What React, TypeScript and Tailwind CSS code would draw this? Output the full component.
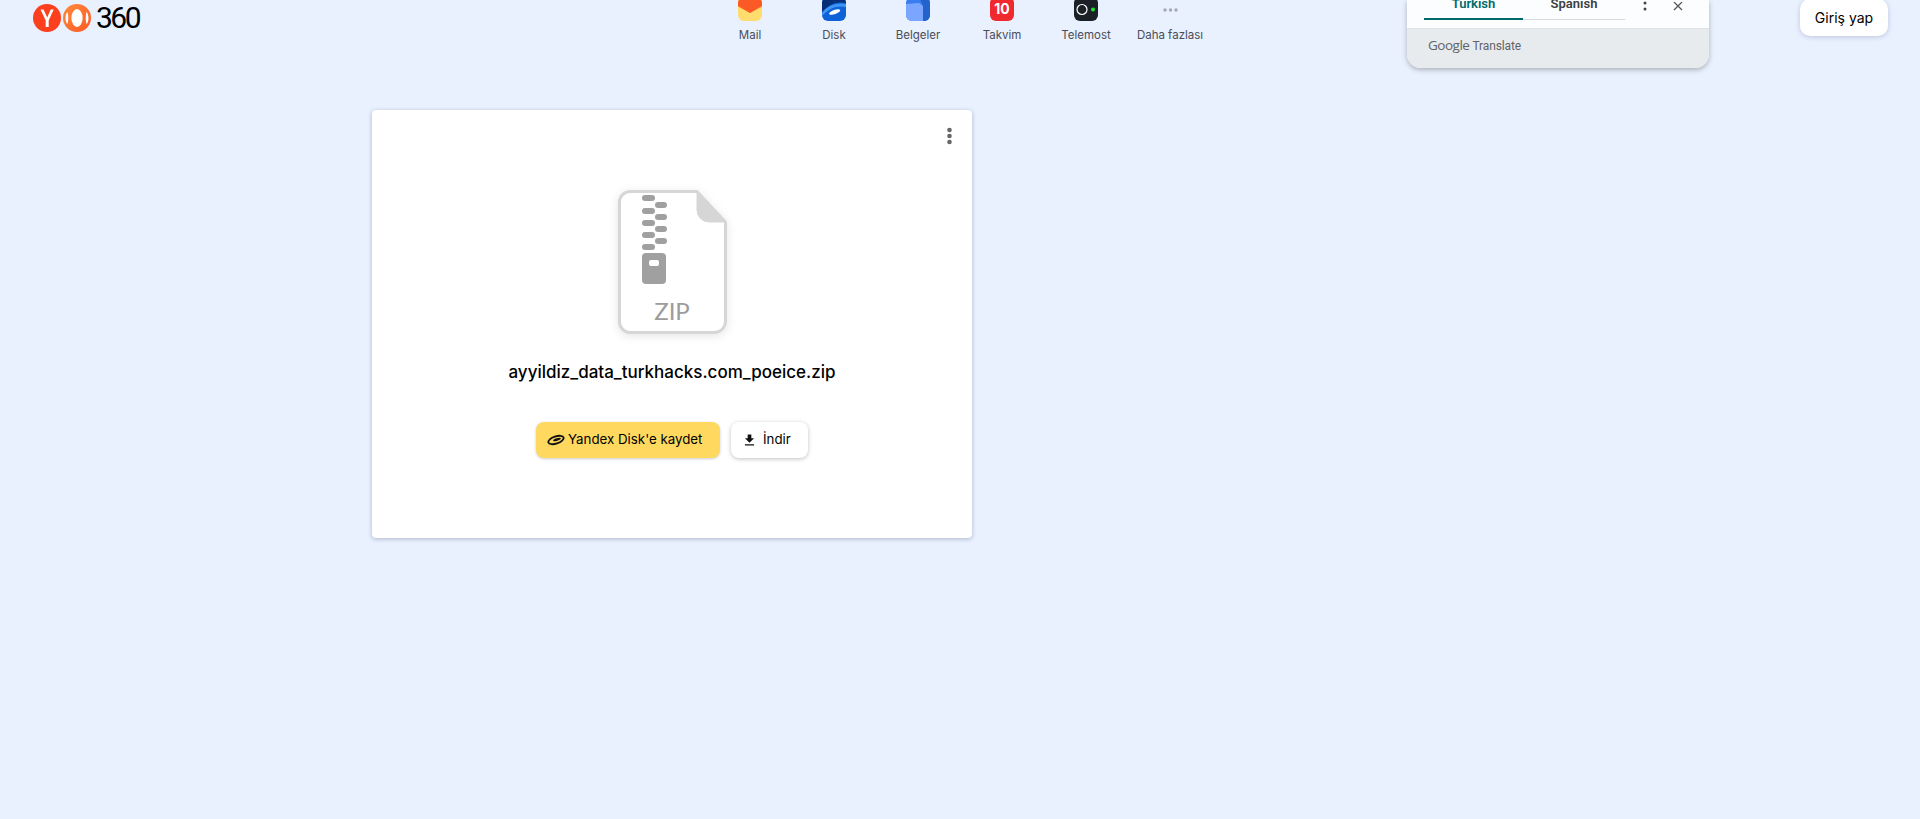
import React from 'react';

const NAV_ITEMS = ['Mail', 'Disk', 'Belgeler', 'Takvim', 'Telemost', 'Daha fazlası'];

function Logo() {
  return (
    <div className="flex items-center">
      <svg width="60" height="30" viewBox="0 0 60 30">
        <defs>
          <linearGradient id="logoOrange" x1="0" y1="0" x2="1" y2="1">
            <stop offset="0" stopColor="#ff8a3c" />
            <stop offset="1" stopColor="#fc5a25" />
          </linearGradient>
        </defs>
        <circle cx="14" cy="15" r="14" fill="#fc3f1d" />
        <path d="M7.500 6.500h3l3.700 8 3.500-8h3l-5 11v6.500h-3v-6.500z" fill="#fff" />
        <circle cx="44" cy="15" r="14" fill="url(#logoOrange)" />
        <ellipse cx="44" cy="15" rx="5.600" ry="9" fill="#fff" />
        <path d="M34.500 9C32 11 31.700 19 34.500 21C35.500 18 35.500 12 34.500 9z" fill="#fff" />
        <path d="M53.500 9C56 11 56.300 19 53.500 21C52.500 18 52.500 12 53.500 9z" fill="#fff" />
      </svg>
      <span className="ml-[3px] font-['Roboto',sans-serif] text-[30px] leading-[30px] tracking-[-2.500px] text-black">360</span>
    </div>
  );
}

function NavIcon({ name }: { name: string }) {
  if (name === 'Mail') {
    return (
      <svg width="24" height="24" viewBox="0 0 24 24">
        <rect width="24" height="24" rx="6" fill="#ffdc6e" />
        <path d="M0 10l12 6 12-6v-4H0z" fill="#ffb53d" />
        <path d="M0 6a6 6 0 0 1 6-6h12a6 6 0 0 1 6 6v3l-12 7-12-7z" fill="#fb5a27" />
      </svg>
    );
  }
  if (name === 'Disk') {
    return (
      <svg width="24" height="24" viewBox="0 0 24 24">
        <rect width="24" height="24" rx="6" fill="#0c62d6" />
        <path d="M0 6a6 6 0 0 1 6-6h12a6 6 0 0 1 6 6c-9-2-17 1-24 9z" fill="#062f78" />
        <path d="M0 16c5-7 14-11 24-9v3c-9-2-17 1-24 9z" fill="#3f95f5" />
        <ellipse cx="12.700" cy="15" rx="5.800" ry="2.200" transform="rotate(-20 12.700 15)" fill="#fff" />
      </svg>
    );
  }
  if (name === 'Belgeler') {
    return (
      <svg width="24" height="24" viewBox="0 0 24 24">
        <rect width="24" height="24" rx="6" fill="#3a7df0" />
        <path d="M0 7l13-1 4 3v15H6a6 6 0 0 1-6-6z" fill="#7ba6ff" />
        <path d="M13 0h5a6 6 0 0 1 6 6v12a6 6 0 0 1-5 6h-2V9z" fill="#2463cc" />
      </svg>
    );
  }
  if (name === 'Takvim') {
    return (
      <svg width="24" height="24" viewBox="0 0 24 24">
        <rect width="24" height="24" rx="6" fill="#f0292f" />
        <text x="12" y="16.500" textAnchor="middle" fontFamily="Inter, sans-serif" fontSize="14" fontWeight="700" fill="#fff">10</text>
      </svg>
    );
  }
  if (name === 'Telemost') {
    return (
      <svg width="24" height="24" viewBox="0 0 24 24">
        <rect width="24" height="24" rx="6" fill="#1a2026" />
        <circle cx="8" cy="12.500" r="5" fill="none" stroke="#fff" strokeWidth="1.200" />
        <circle cx="19" cy="12.500" r="2" fill="#19e62c" />
      </svg>
    );
  }
  return (
    <svg width="24" height="24" viewBox="0 0 24 24">
      <circle cx="7" cy="13" r="1.700" fill="#a5a8b2" />
      <circle cx="12.500" cy="13" r="1.700" fill="#a5a8b2" />
      <circle cx="18" cy="13" r="1.700" fill="#a5a8b2" />
    </svg>
  );
}

function TranslatePopup() {
  return (
    <div className="absolute right-[211px] top-0 flex h-[68px] w-[302px] flex-col justify-end overflow-hidden rounded-b-[14px] bg-[#fbfdff] shadow-[0_2px_5px_rgba(60,64,67,0.35)]">
      <div className="flex h-[28px] items-end pb-[8px] pl-[17px]">
        <div className="flex w-[201px] font-['Roboto',sans-serif] text-[13px] font-semibold">
          <div className="flex h-[22px] w-[99px] items-start justify-center border-b-[2px] border-[#00696b] leading-[12px] text-[#00696b]">
            Turkish
          </div>
          <div className="flex h-[22px] w-[102px] items-start justify-center border-b border-[#d5d8dc] leading-[12px] text-[#3c4043]">
            Spanish
          </div>
        </div>
        <svg className="mb-[6px] ml-[18px]" width="4" height="14" viewBox="0 0 4 14">
          <circle cx="2" cy="3" r="1.500" fill="#444" />
          <circle cx="2" cy="9" r="1.500" fill="#444" />
        </svg>
        <svg className="mb-[8px] ml-[26px]" width="10" height="10" viewBox="0 0 10 10">
          <path d="M1 0l8 8M9 0L1 8" stroke="#555" strokeWidth="1.300" fill="none" />
        </svg>
      </div>
      <div className="flex h-[40px] items-center border-t border-[#dfe2e5] bg-[#e8ebee] pb-[6px] pl-[21px] text-[#5f6368]">
        <span className="mr-[3px] font-['Open_Sans',sans-serif] text-[13.500px] tracking-[-0.500px]">Google</span>
        <span className="font-['Roboto',sans-serif] text-[12px] tracking-[-0.100px]">Translate</span>
      </div>
    </div>
  );
}

function ZipIcon() {
  return (
    <svg className="overflow-visible" width="109" height="144" viewBox="0 0 109 144">
      <defs>
        <filter id="fileShadow" x="-20%" y="-20%" width="140%" height="140%">
          <feDropShadow dx="0" dy="2" stdDeviation="5" floodColor="#000" floodOpacity="0.1" />
        </filter>
      </defs>
      <path
        d="M12 1.500h67l28.500 30.500v99.500a11 11 0 0 1-11 11H12a10.500 10.500 0 0 1-10.500-10.500V12A10.500 10.500 0 0 1 12 1.500z"
        fill="#fff"
        stroke="#d6d6d6"
        strokeWidth="3"
        strokeLinejoin="round"
        filter="url(#fileShadow)"
      />
      <path d="M79 1.500l28.500 30.500H91a12 12 0 0 1-12-12z" fill="#d6d6d6" stroke="#d6d6d6" strokeLinejoin="round" />
      {[8, 21, 33, 45, 57].map((y) => (
        <rect key={y} x="24" y={y - 3} width="13" height="6" rx="3" fill="#a0a0a0" />
      ))}
      {[15, 27, 39, 51].map((y) => (
        <rect key={y} x="37" y={y - 3} width="12" height="6" rx="3" fill="#a0a0a0" />
      ))}
      <rect x="24" y="63" width="24" height="31" rx="4" fill="#a0a0a0" />
      <rect x="31" y="70" width="10" height="6" rx="2" fill="#fff" />
      <text x="54" y="130" textAnchor="middle" fontFamily="Lato, sans-serif" fontSize="24" fill="#9c9c9c">ZIP</text>
    </svg>
  );
}

export default function App() {
  return (
    <div className="relative min-h-screen overflow-hidden bg-[#e9f0fe] font-['Inter',sans-serif]">
      {/* Header - page is scrolled a little so the top is cut */}
      <header className="grid h-[50px] grid-cols-[1fr_auto_1fr] items-start">
        <div className="pl-[33px] pt-[3px]">
          <Logo />
        </div>
        <nav className="flex">
          {NAV_ITEMS.map((name) => (
            <div key={name} className="-mt-[3px] flex w-[84px] flex-col items-center">
              <NavIcon name={name} />
              <span className="mt-[6px] text-[11.500px] leading-[16px] text-[#4a4d59]">{name}</span>
            </div>
          ))}
        </nav>
        <div className="flex justify-end pr-[32px]">
          <button className="-mt-[1px] h-[37px] w-[88px] rounded-[10px] bg-white text-[14px] text-black shadow-[0_1px_5px_rgba(60,70,120,0.25)]">
            Giriş yap
          </button>
        </div>
      </header>

      <TranslatePopup />

      <main className="pl-[372px] pt-[60px]">
        <section className="relative flex h-[428px] w-[600px] flex-col items-center rounded-[4px] bg-white pt-[80px] shadow-[0_1px_4px_rgba(60,70,110,0.35)]">
          <svg className="absolute right-[20px] top-[16px]" width="5" height="20" viewBox="0 0 5 20">
            <circle cx="2.500" cy="4" r="2.300" fill="#666" />
            <circle cx="2.500" cy="10" r="2.300" fill="#666" />
            <circle cx="2.500" cy="16" r="2.300" fill="#666" />
          </svg>
          <ZipIcon />
          <h1 className="mt-[26px] text-[17px] font-medium leading-[24px] text-black">ayyildiz_data_turkhacks.com_poeice.zip</h1>
          <div className="mt-[38px] flex gap-[11px] text-[13.300px]">
            <button className="flex h-[36px] w-[184px] items-center gap-[3px] rounded-[8px] bg-[#ffd95f] pl-[11px] text-black shadow-[0_1px_3px_rgba(0,0,0,0.2)]">
              <svg width="18" height="12" viewBox="0 0 18 12">
                <ellipse cx="9" cy="6" rx="8" ry="3.600" transform="rotate(-18 9 6)" fill="none" stroke="#111" strokeWidth="1.800" />
                <ellipse cx="10" cy="5.500" rx="4" ry="1.300" transform="rotate(-18 10 5.500)" fill="#111" />
              </svg>
              Yandex Disk'e kaydet
            </button>
            <button className="flex h-[36px] w-[77px] items-center gap-[8px] rounded-[8px] bg-white pl-[13px] text-black shadow-[0_1px_4px_rgba(0,0,0,0.25)]">
              <svg width="11" height="12" viewBox="0 0 12 12">
                <path d="M4 0h4v4h3L6 9 1 4h3zM1 10.500h10V12H1z" fill="#111" />
              </svg>
              İndir
            </button>
          </div>
        </section>
      </main>
    </div>
  );
}
